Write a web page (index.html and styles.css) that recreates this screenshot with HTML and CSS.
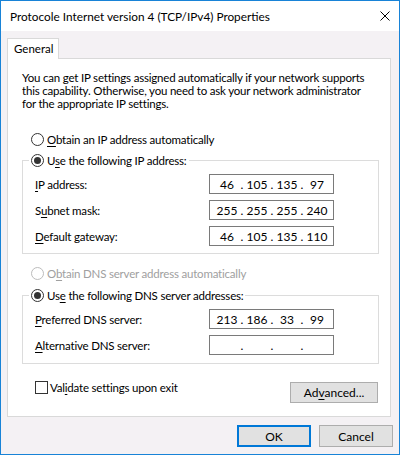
FILE: index.html
```html
<!DOCTYPE html>
<html lang="en">
<head>
    <meta charset="UTF-8">
    <title>Protocole Internet version 4 (TCP/IPv4) Properties</title>
    <link rel="stylesheet" href="styles.css">
</head>
<body>
<div class="window">
    <div class="titlebar">
        <span class="title">Protocole Internet version 4 (TCP/IPv4) Properties</span>
        <svg class="close" width="10" height="10" viewBox="0 0 10 10">
            <path d="M0.5 0.5 L9.5 9.5 M9.5 0.5 L0.5 9.5" stroke="#000" stroke-width="1" fill="none"/>
        </svg>
    </div>

    <div class="content">
        <div class="tabs"><div class="tab">General</div></div>

        <div class="panel">
            <p class="intro">You can get IP settings assigned automatically if your network supports<br>this capability. Otherwise, you need to ask your network administrator<br>for the appropriate IP settings.</p>

            <div class="option first">
                <span class="radio"></span>
                <span><u>O</u>btain an IP address automatically</span>
            </div>

            <fieldset class="group group-ip">
                <legend>
                    <span class="radio checked"></span>
                    <span>U<u>s</u>e the following IP address:</span>
                </legend>
                <div class="field">
                    <span class="label"><u>I</u>P address:</span>
                    <div class="ip"><span class="seg">46</span><span class="dot">.</span><span class="seg">105</span><span class="dot">.</span><span class="seg">135</span><span class="dot">.</span><span class="seg">97</span></div>
                </div>
                <div class="field">
                    <span class="label">S<u>u</u>bnet mask:</span>
                    <div class="ip"><span class="seg">255</span><span class="dot">.</span><span class="seg">255</span><span class="dot">.</span><span class="seg">255</span><span class="dot">.</span><span class="seg">240</span></div>
                </div>
                <div class="field">
                    <span class="label"><u>D</u>efault gateway:</span>
                    <div class="ip"><span class="seg">46</span><span class="dot">.</span><span class="seg">105</span><span class="dot">.</span><span class="seg">135</span><span class="dot">.</span><span class="seg">110</span></div>
                </div>
            </fieldset>

            <div class="option dns disabled">
                <span class="radio"></span>
                <span>O<u>b</u>tain DNS server address automatically</span>
            </div>

            <fieldset class="group group-dns">
                <legend>
                    <span class="radio checked"></span>
                    <span>Us<u>e</u> the following DNS server addresses:</span>
                </legend>
                <div class="field">
                    <span class="label"><u>P</u>referred DNS server:</span>
                    <div class="ip"><span class="seg">213</span><span class="dot">.</span><span class="seg">186</span><span class="dot">.</span><span class="seg">33</span><span class="dot">.</span><span class="seg">99</span></div>
                </div>
                <div class="field">
                    <span class="label"><u>A</u>lternative DNS server:</span>
                    <div class="ip"><span class="seg"></span><span class="dot">.</span><span class="seg"></span><span class="dot">.</span><span class="seg"></span><span class="dot">.</span><span class="seg"></span></div>
                </div>
            </fieldset>

            <div class="footer">
                <div class="check">
                    <span class="box"></span>
                    <span>Val<u>i</u>date settings upon exit</span>
                </div>
                <button class="btn advanced">Ad<u>v</u>anced...</button>
            </div>
        </div>

        <div class="actions">
            <button class="btn action default">OK</button>
            <button class="btn action">Cancel</button>
        </div>
    </div>
</div>
</body>
</html>
```

FILE: styles.css
```css
body {
    margin: 0;
    font-family: Lato, "Liberation Sans", Arial, sans-serif;
    font-size: 11.5px;
    letter-spacing: -0.2px;
    color: #000;
}
u { text-decoration-thickness: 1px; text-underline-offset: 2px; }

.window {
    width: 400px;
    height: 455px;
    box-sizing: border-box;
    border: 1px solid #1883d7;
    background: #f4f1f4;
}
.titlebar {
    height: 30px;
    background: #fff;
    display: flex;
    align-items: center;
    justify-content: space-between;
    padding: 0 9px;
}
.title { font-size: 11.8px; letter-spacing: 0; }
.close { display: block; }

.content { padding: 7px 8px 0 6px; }
.tabs { height: 20px; display: flex; }
.tab {
    width: 52px;
    height: 21px;
    box-sizing: border-box;
    border: 1px solid #d9d9d9;
    border-bottom: none;
    background: #fff;
    padding-left: 6px;
    line-height: 19px;
    letter-spacing: 0;
    position: relative;
    z-index: 1;
}
.panel {
    background: #fff;
    border: 1px solid #d9d9d9;
    height: 359px;
    box-sizing: border-box;
    padding-top: 12px;
}
.intro {
    margin: 0 0 0 14px;
    line-height: 13px;
    white-space: nowrap;
}

.option {
    display: flex;
    align-items: center;
    gap: 3px;
    height: 16px;
    margin-left: 23px;
}
.option.first { margin-top: 21px; }
.option.dns { margin-top: 11px; }
.disabled { color: #a0a0a0; }
.disabled .radio { border-color: #bcbcbc; }

.radio {
    width: 13px;
    height: 13px;
    box-sizing: border-box;
    border: 1px solid #333;
    border-radius: 50%;
    background: #fff;
    position: relative;
    flex: none;
}
.radio.checked::after {
    content: "";
    position: absolute;
    inset: 2px;
    border-radius: 50%;
    background: #333;
}

.group {
    margin: 5px 11px 0 14px;
    padding: 6px 0 7px 0;
    border: 1px solid #dcdcdc;
    min-width: 0;
}
.group-dns { margin-top: 6px; padding-bottom: 8px; }
.group legend {
    display: flex;
    align-items: center;
    gap: 3px;
    height: 16px;
    margin-left: 6px;
    padding: 0 2px;
}
.field {
    display: flex;
    align-items: center;
    height: 20px;
    padding-left: 12px;
    margin-top: 6px;
}
.field:first-of-type { margin-top: 0; }
.label { width: 174px; flex: none; }
.ip {
    width: 125px;
    height: 20px;
    box-sizing: border-box;
    border: 1px solid #7a7a7a;
    background: #fff;
    display: flex;
    align-items: center;
    padding-left: 4px;
    letter-spacing: 0;
    font-size: 12px;
}
.seg { width: 26px; text-align: center; }
.dot { width: 4px; text-align: center; }

.footer {
    display: flex;
    justify-content: space-between;
    align-items: flex-start;
    margin: 17px 12px 0 27px;
}
.check {
    display: flex;
    align-items: center;
    gap: 2px;
    height: 13px;
}
.box {
    width: 13px;
    height: 13px;
    box-sizing: border-box;
    border: 1px solid #333;
    background: #fff;
}

.btn {
    font: inherit;
    letter-spacing: 0;
    font-size: 12px;
    color: #000;
    height: 21px;
    padding: 0;
    border: 1px solid #adadad;
    background: #e1e1e1;
}
.advanced { width: 88px; margin-top: 1px; }
.actions {
    display: flex;
    justify-content: flex-end;
    gap: 8px;
    margin: 8px -2px 0 0;
}
.action { width: 74px; height: 22px; }
.action.default { border: 2px solid #0078d7; }
```
